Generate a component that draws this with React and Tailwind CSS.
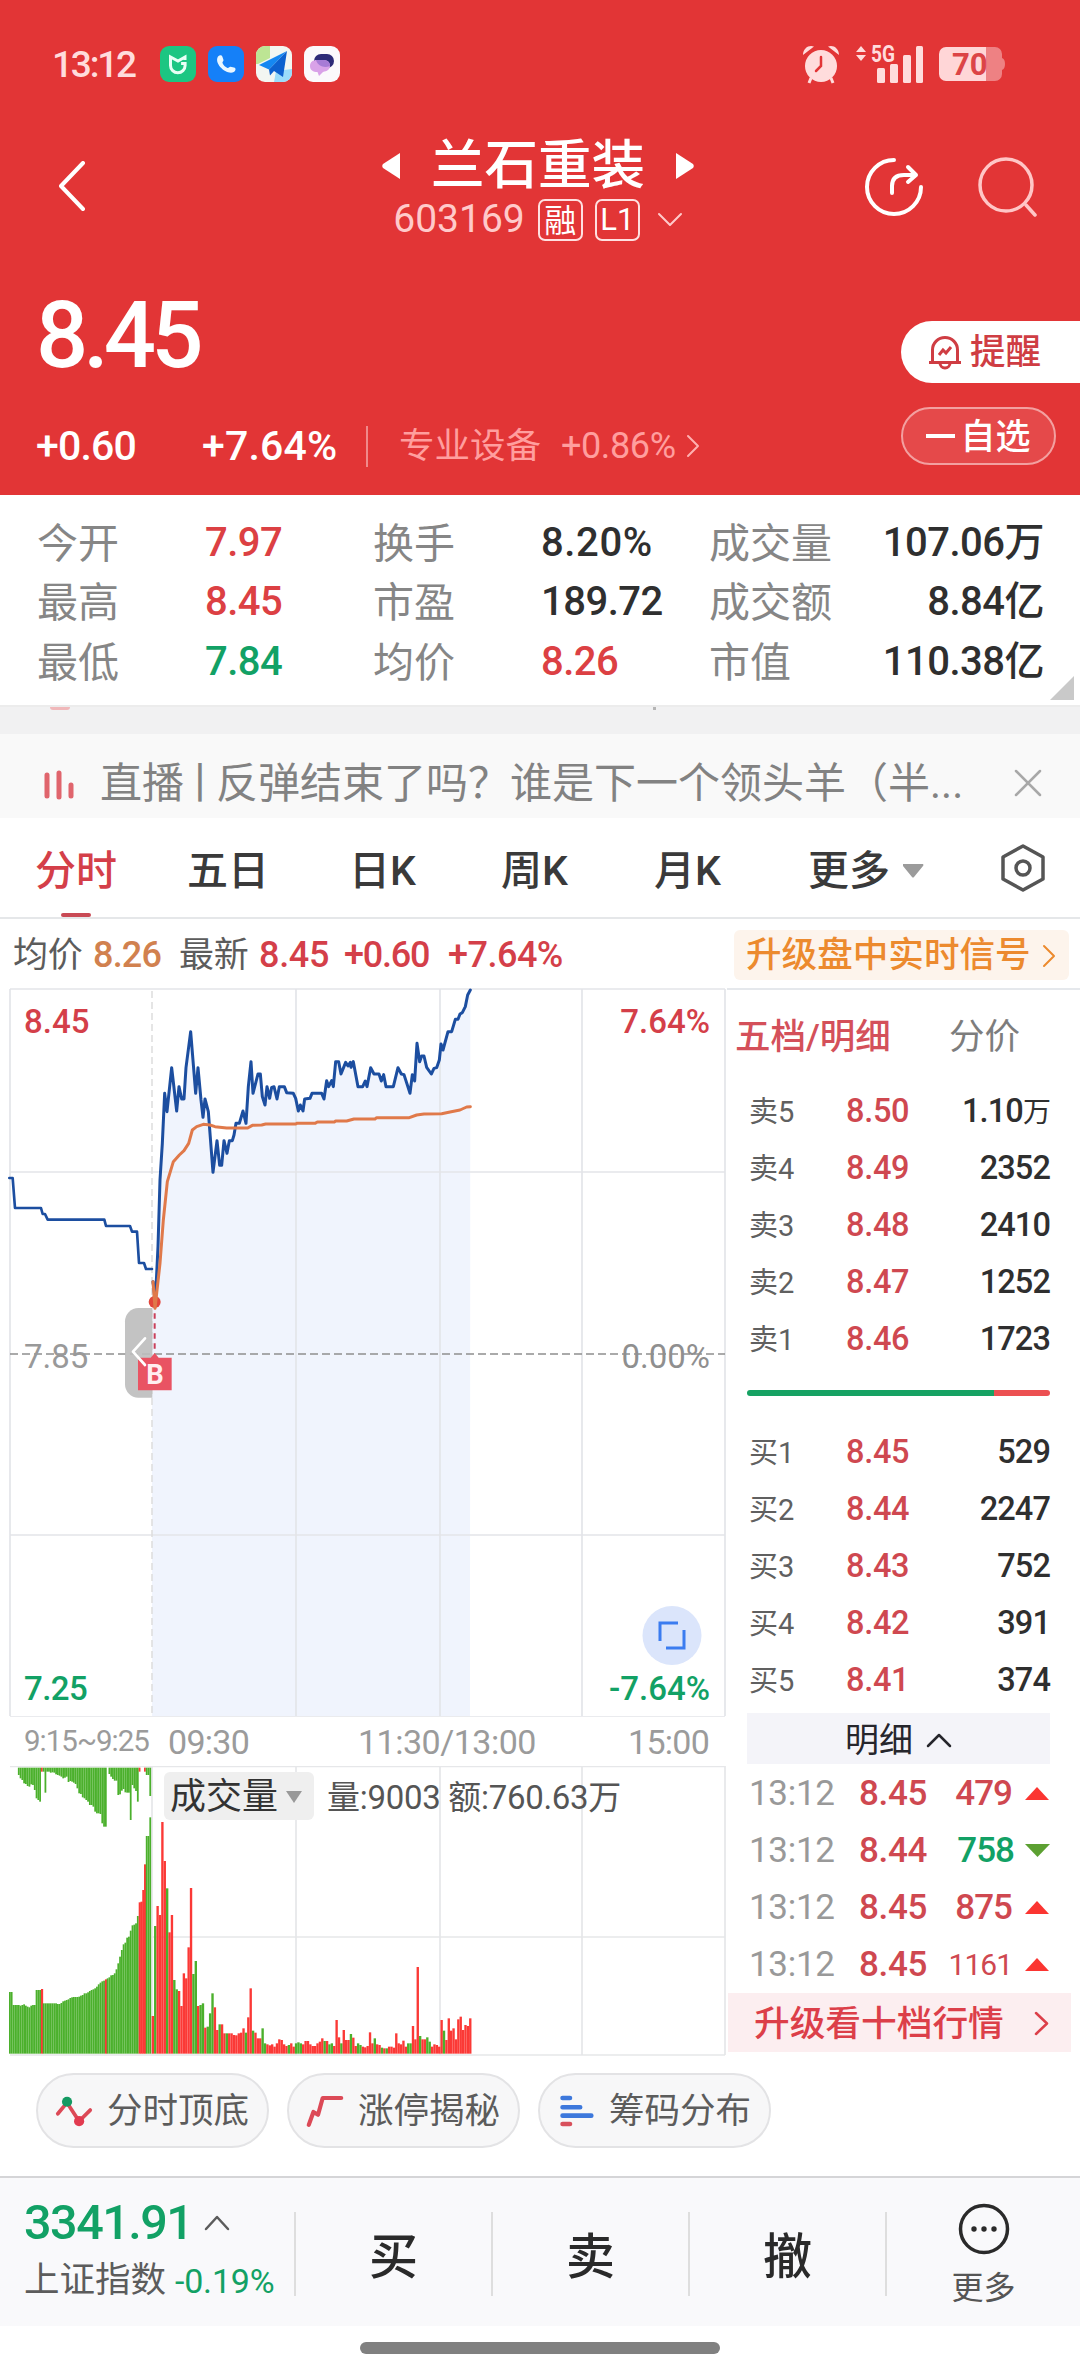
import React from "react";

const statRows = [
    [["今开", "7.97", "red"], ["换手", "8.20%", "dark"], ["成交量", "107.06万", "dark"]],
    [["最高", "8.45", "red"], ["市盈", "189.72", "dark"], ["成交额", "8.84亿", "dark"]],
    [["最低", "7.84", "green"], ["均价", "8.26", "red"], ["市值", "110.38亿", "dark"]],
];

const textColors = {
    red: "text-[#dc4043]",
    green: "text-[#12a165]",
    dark: "text-[#2f2f2f]",
};

const sells = [
    ["卖5", "8.50", "1.10", "万"],
    ["卖4", "8.49", "2352"],
    ["卖3", "8.48", "2410"],
    ["卖2", "8.47", "1252"],
    ["卖1", "8.46", "1723"],
];

const buys = [
    ["买1", "8.45", "529"],
    ["买2", "8.44", "2247"],
    ["买3", "8.43", "752"],
    ["买4", "8.42", "391"],
    ["买5", "8.41", "374"],
];

const trades = [
    { time: "13:12", price: "8.45", qty: "479", up: true },
    { time: "13:12", price: "8.44", qty: "758", up: false },
    { time: "13:12", price: "8.45", qty: "875", up: true },
    { time: "13:12", price: "8.45", qty: "1161", up: true },
];

// price lines, in thirds of a pixel
const preLine =
    "28,594 38,594 45,684 123,684 128,702 135,702 143,719 313,719 318,738 390,738 396,755 411,755 417,849 432,849 438,867 456,867";
const priceLine =
    "459,905 466,965 474,800 480,600 487,490 494,340 501,395 515,263 530,393 537,320 545,357 552,357 558,263 572,155 587,340 594,263 603,360 609,412 615,357 625,395 639,577 651,482 659,556 665,556 672,482 681,520 688,482 697,482 702,465 708,430 718,430 729,393 738,430 745,320 753,245 759,340 774,282 781,282 787,350 795,375 801,320 809,355 815,322 822,320 831,357 838,320 853,320 860,338 880,340 887,355 895,393 901,375 909,393 914,357 930,355 936,340 965,340 972,357 980,302 986,320 995,302 1000,320 1007,245 1016,245 1023,282 1037,247 1044,258 1051,247 1053,262 1060,245 1074,320 1088,320 1096,303 1101,320 1112,263 1122,282 1137,282 1144,303 1151,284 1158,320 1180,320 1194,263 1204,282 1212,284 1230,340 1237,284 1244,303 1251,190 1259,245 1265,228 1272,228 1280,262 1294,282 1302,265 1310,263 1318,240 1323,192 1329,210 1344,155 1355,155 1366,118 1374,118 1380,102 1387,98 1396,80 1403,45 1411,30";
const avgLine =
    "459,905 465,985 480,850 490,720 502,605 520,545 538,525 552,512 566,490 577,450 590,440 610,433 630,435 645,440 680,444 743,444 757,436 785,435 797,432 888,432 890,430 945,430 952,426 1003,426 1007,423 1040,423 1062,417 1125,417 1130,413 1228,413 1250,405 1272,402 1325,401 1350,396 1380,390 1400,381 1411,380";

// volume bars: top edge plus r(ed) / g(reen)
const parseBars = (text) =>
    text.split(" ").map((item) => ({ y: parseInt(item, 10), red: item.endsWith("r") }));

const callBars = parseBars(
    "696 696 735 735 735 735 737 735 733 737 740 742 737 735 735 690 690 690 687r 730 730 730 730 730 730 730 730 732 732 729 724 722 720 718 714 712 711 711 711 710 707 705 700 700 697 693 690 688 685 680 673 668 664 662 658r 655 652 646 645 640 628 610 590 570 553 548 533 530 512 496 494 490 468 427r 425r 390r 313r 228 228 172"
);
const hangBars = parseBars(
    "0 0 0 0 0 45 55 60 70 72 78 80 73 75 90 115 120 125 35r 35 98 35 35 38 37 38 43 45 47 50 55 53 50 66 63 65 68 72 85 100 102 112 115 120 125 135 135 140 155 160 160 162 190 200 200 0 42 50 57 62 62 105 103 92 87 97 98 98 180 75 85 93 125 35r 0 0 35r 45 45 108"
);
const dayBars = parseBars(
    "768r 498 438r 465r 186r 303r 385 517r 465r 660 688 693r 738r 640r 655r 562r 384r 642 603 738r 735 730 803r 800 760 700 742r 810r 793 793r 820r 820 820r 820r 825r 826r 820r 818r 805r 818 772r 685r 812 818r 835r 835r 805 850 853r 856r 853r 860r 850r 838r 840r 853r 858r 855 850r 860r 850 847 850 853r 843r 843r 853r 858r 858r 850r 845r 835r 843 843r 853 850 858r 780r 832r 850 810r 840r 840r 822 833r 858r 850 855 860r 862r 858r 817r 850r 835 853r 855r 863 865r 865 860r 860r 863r 820r 850r 853r 842r 860r 850 850 798r 838r 621r 828 838r 838r 832 845 860r 853r 855r 860r 780r 812 840r 775r 812r 805r 838r 778r 770r 810r 795r 798r 775r"
);

const barColor = (bar) => (bar.red ? "#fb3936" : "#4bb02c");

const Chevron = ({ d, className, w, h, stroke = 2.5 }) => (
    <svg className={className} width={w} height={h} viewBox={`0 0 ${w} ${h}`} fill="none" stroke="currentColor" strokeWidth={stroke} strokeLinecap="round" strokeLinejoin="round">
        <path d={d} />
    </svg>
);

const StatusBar = () => (
    <div className="flex h-[128px] items-center pl-[52px] pr-[74px] text-[#ffdcdc]">
        <span className="w-[108px] text-[37px] font-medium tracking-[-2.2px]">13:12</span>
        <div className="flex gap-[12px]">
            <svg width="36" height="36" viewBox="0 0 36 36">
                <rect width="36" height="36" rx="9" fill="#1cc682" />
                <path d="M10.5 17V11l7.500 4L25 11v3" fill="none" stroke="#e8fff5" strokeWidth="3" />
                <path d="M10.500 16v3.500a7.300 7.300 0 0 0 14.600 0V17.500h-4" fill="none" stroke="#e8fff5" strokeWidth="3" />
            </svg>
            <svg width="36" height="36" viewBox="0 0 36 36">
                <rect width="36" height="36" rx="9" fill="#1580f8" />
                <path d="M10 10.500c2-2 4-1.500 4.500.500l1 3c.3 1.200-1.500 1.800-1 3 .8 2.200 2.700 4 5 5 1.200.5 1.700-1.500 3-1.200l3.500.8c2.200.7 2 3-.2 4.500C18.500 29.500 5.500 17.500 10 10.500z" fill="#e9f6ff" />
            </svg>
            <svg width="36" height="36" viewBox="0 0 36 36">
                <rect width="36" height="36" rx="9" fill="#f3f6f2" />
                <path d="M9 0h5v12L2 18H0V9a9 9 0 0 1 9-9z" fill="#bde594" />
                <path d="M20 25l16-2v4a9 9 0 0 1-9 9h-9z" fill="#9adcfa" />
                <path d="M31 5L3 19l10 4.500z" fill="#1588f2" />
                <path d="M31 5L13 23.500l1 6 4-4.500 9 6z" fill="#0d61cf" />
            </svg>
            <svg width="36" height="36" viewBox="0 0 36 36">
                <rect width="36" height="36" rx="9" fill="#fbf9fc" />
                <rect x="10" y="8" width="20" height="14" rx="7" fill="#2d2a78" />
                <path d="M13 14h6c3 0 7 1 7 5.500S23 25 19 26l-4 4-1.500-4C9 26 6 24 6 20s3-6 7-6z" fill="#d9a2e8" />
                <path d="M13 14h6c3 0 7 1.500 7 6-5 2-12 1-14-6z" fill="#a77bd6" />
            </svg>
        </div>
        <div className="ml-auto flex items-center">
            <svg width="38" height="39" viewBox="0 0 38 39" fill="currentColor">
                <circle cx="19" cy="21" r="16" />
                <path d="M1 10C1 3 7-.5 12 1.500z M37 10C37 3 31-.5 26 1.500z" />
                <path d="M9 33l-2 5M29 33l2 5" stroke="currentColor" strokeWidth="3" />
                <path d="M19 12v9l-5 5" fill="none" stroke="#e23536" strokeWidth="2.500" strokeLinecap="round" />
            </svg>
            <svg className="-mt-[6px] ml-[15px]" width="70" height="44" viewBox="0 -6 70 44" fill="currentColor">
                <path d="M1 7l5-6 5 6z M1 10l5 6 5-6z" />
                <text x="16" y="16.500" fontFamily="Roboto" fontSize="23" fontWeight="700" textLength="24" lengthAdjust="spacingAndGlyphs">5G</text>
                <rect x="22" y="23" width="8" height="15" rx="1.500" />
                <rect x="35" y="19" width="8" height="19" rx="1.500" />
                <rect x="48" y="10" width="8" height="28" rx="1.500" />
                <rect x="61" y="1" width="7" height="37" rx="1.500" />
            </svg>
            <svg className="ml-[14px]" width="67" height="38" viewBox="0 -2 67 38">
                <path d="M47 0h9a7 7 0 0 1 7 7v4q3 1 3 6t-3 6v4a7 7 0 0 1-7 7h-9z" fill="#ee8183" />
                <path d="M7 0h40v34H7a7 7 0 0 1-7-7V7a7 7 0 0 1 7-7z" fill="#ffd6d7" />
                <text x="13" y="28" fontFamily="Roboto" fontSize="31" fontWeight="700" fill="#dc4446">70</text>
            </svg>
        </div>
    </div>
);

const TitleBar = () => (
    <div className="flex h-[122px] items-center pl-[58px] pr-[42px] text-white">
        <Chevron w={28} h={50} d="M25 2L3 25l22 23" stroke={4} className="mb-[6px]" />
        <div className="ml-auto flex w-[320px] flex-col items-center">
            <div className="flex h-[62px] items-center gap-[31px]">
                <svg width="18" height="26" viewBox="0 0 18 26" fill="currentColor"><path d="M18 0v26L1 15q-1.500-2 0-4z" /></svg>
                <h1 className="text-[53.500px] font-medium leading-[62px]">兰石重装</h1>
                <svg width="18" height="26" viewBox="0 0 18 26" fill="currentColor"><path d="M0 0v26l17-11q1.500-2 0-4z" /></svg>
            </div>
            <div className="mb-[1px] flex h-[46px] items-center">
                <span className="text-[39px] text-[#ffcaca]">603169</span>
                <span className="ml-[13px] flex h-[42px] w-[45px] items-center justify-center rounded-[7px] border-2 border-[#ffe0e0] pt-[2px] text-[32px]">融</span>
                <span className="ml-[12px] flex h-[42px] w-[45px] items-center justify-center rounded-[7px] border-2 border-[#ffe0e0] text-[31px]">L1</span>
                <Chevron w={26} h={16} d="M2 2l11 11L24 2" stroke={2} className="ml-[17px] text-[#ffcaca]" />
            </div>
        </div>
        <svg className="mb-[5px] ml-[166px]" width="60" height="60" viewBox="0 0 60 60" fill="none" stroke="currentColor" strokeWidth="4" strokeLinecap="round" strokeLinejoin="round">
            <path d="M30 3a27 27 0 1 0 27 27M28 36v-7q0-11 12-11h12M44 10l8 8-8 7" />
        </svg>
        <svg className="mb-[5px] ml-[54px] text-[#ffc6c6]" width="60" height="60" viewBox="0 0 60 60" fill="none" stroke="currentColor" strokeWidth="3.500" strokeLinecap="round">
            <circle cx="28" cy="28" r="26" />
            <path d="M48 48l9 10" />
        </svg>
    </div>
);

const Header = () => (
    <header className="flex h-[495px] flex-col bg-[#e23536]">
        <StatusBar />
        <TitleBar />
        <div className="flex flex-1 justify-between pl-[36px] text-white">
            <div>
                <div className="h-[92px] mt-[40px] text-[92px] font-medium tracking-[-5px]">8.45</div>
                <div className="mt-[43px] flex h-[42px] items-center text-[41px] font-medium tracking-[-0.8px]">
                    <span className="w-[166px]">+0.60</span>
                    <span className="w-[164px] tracking-[0.2px]">+7.64%</span>
                    <span className="h-[41px] w-[2px] bg-[#f08a8b]" />
                    <span className="ml-[31px] pt-[1px] text-[35.500px] font-normal tracking-normal text-[#ff9e9e]">专业设备</span>
                    <span className="ml-[20px] w-[125px] text-[36px] font-normal tracking-[-0.4px] text-[#ff9e9e]">+0.86%</span>
                    <Chevron w={15} h={24} d="M2 2l10 10L2 22" stroke={2} className="text-[#ffb0b0]" />
                </div>
            </div>
            <div className="flex w-[179px] flex-col pt-[71px]">
                <div className="flex h-[62px] items-center rounded-l-full bg-white pl-[27px] text-[35.500px] font-medium text-[#cf3d43]">
                    <svg className="mr-[8px]" width="34" height="36" viewBox="0 0 34 36" fill="none" stroke="currentColor" strokeWidth="3">
                        <path d="M4.500 28V16a12.500 12.500 0 0 1 25 0v12M1 28.500h32M12 29a5 5 0 0 0 10 0" />
                        <path d="M11 21l4-5 3 3 5-6" />
                    </svg>
                    <span className="pt-[2px]">提醒</span>
                </div>
                <div className="mt-[24px] flex h-[58px] w-[155px] items-center justify-center rounded-full border-2 border-[#f3a0a0] bg-[#e5494a] text-[35px] font-medium">
                    <span className="mr-[5px] h-[4px] w-[29px] bg-white" />
                    <span className="pt-[2px]">自选</span>
                </div>
            </div>
        </div>
    </header>
);

const Stats = () => (
    <section className="relative flex h-[210px] flex-col pl-[37px] pr-[36px] pt-[18px]">
        {statRows.map((row, i) => (
            <div key={i} className="flex h-[59.500px] items-center text-[40px]">
                {row.map(([label, value, color], j) => (
                    <React.Fragment key={label}>
                        <span className={`${j === 2 ? "w-[128px]" : "w-[168px]"} pt-[3px] text-[41px] text-[#868686]`}>{label}</span>
                        <span className={`${j === 2 ? "flex-1 text-right" : "w-[168px]"} font-medium ${value.endsWith("%") ? "tracking-[0.6px]" : "tracking-[-0.5px]"} ${textColors[color]}`}>{value}</span>
                    </React.Fragment>
                ))}
            </div>
        ))}
        <svg className="absolute bottom-[5px] right-[6px]" width="24" height="24" viewBox="0 0 24 24"><path d="M24 0v24H0z" fill="#c9c9c9" /></svg>
    </section>
);

const LiveBanner = () => (
    <section>
        <div className="flex h-[29px] items-start border-t-2 border-[#ececec] bg-[#f1f1f2]">
            <span className="ml-[50px] h-[3px] w-[20px] rounded-b-full bg-[#f0b8ba]" />
            <span className="ml-[583px] h-[3px] w-[3px] bg-[#b5b5b5]" />
        </div>
        <div className="flex h-[84px] items-center bg-[#f9f9f9] pl-[44px] pr-[38px] pt-[16px]">
            <svg className="mt-[1px] w-[56px]" width="56" height="30" viewBox="0 0 56 30" stroke="#e0656d" strokeWidth="5" strokeLinecap="round">
                <path d="M3 5v21M15 3v24M27 15v11" />
            </svg>
            <span className="whitespace-nowrap text-[42px] text-[#828282]">
                直播<span className="-mx-[5px]">丨</span>反弹结束了吗？谁是下一个领头羊（半...
            </span>
            <Chevron w={28} h={28} d="M2 2l24 24M26 2L2 26" stroke={2.500} className="mb-[2px] ml-auto text-[#a8a8a8]" />
        </div>
    </section>
);

const Tabs = () => (
    <nav className="flex h-[101px] items-stretch border-b-2 border-[#e5e7e9] pl-[35px] text-[41px] font-medium text-[#3a3a3a]">
        <div className="flex w-[152px] flex-col justify-between pt-[33px] text-[#d43f49]">
            分时
            <span className="ml-[26px] h-[4px] w-[30px] rounded-full bg-[#c94a55]" />
        </div>
        <span className="w-[162px] pt-[33px]">五日</span>
        <span className="w-[152px] pt-[33px]">日K</span>
        <span className="w-[153px] pt-[33px]">周K</span>
        <span className="w-[154px] pt-[33px]">月K</span>
        <span className="w-[94px] pt-[33px]">更多</span>
        <svg className="mt-[46px]" width="22" height="14" viewBox="0 0 22 14"><path d="M1 0h20q1 1 0 2l-9 11q-1 1-2 0L1 2z" fill="#9b9b9b" /></svg>
        <svg className="ml-[76px] mt-[26px]" width="46" height="48" viewBox="0 0 46 48" fill="none" stroke="#555555" strokeWidth="3.500" strokeLinejoin="round">
            <path d="M23 2l20 11v22L23 46 3 35V13z" />
            <circle cx="23" cy="24" r="7" />
        </svg>
    </nav>
);

const InfoRow = () => (
    <div className="flex h-[69px] items-center pl-[13px] pr-[11px] pt-[2px] text-[36px] font-medium tracking-[-0.3px] text-[#d43f49]">
        <span className="w-[80px] pt-[2px] text-[35px] font-normal text-[#5c5c5c]">均价</span>
        <span className="w-[86px] tracking-[-0.8px] text-[#d1814f]">8.26</span>
        <span className="w-[80px] pt-[2px] text-[35px] font-normal text-[#5c5c5c]">最新</span>
        <span className="w-[85px]">8.45</span>
        <span className="w-[104px] tracking-[-1.2px]">+0.60</span>
        <span className="tracking-[-0.5px]">+7.64%</span>
        <div className="ml-auto flex h-[50px] w-[335px] items-center rounded-[6px] bg-[#fdf4ec] pl-[12px] pt-[2px] text-[35.600px] tracking-normal text-[#ec8a2e]">
            升级盘中实时信号
            <Chevron w={15} h={24} d="M2 2l10 10L2 22" stroke={2} className="ml-[11px]" />
        </div>
    </div>
);

const PriceChart = () => (
    <div className="relative h-[729px] text-[33px] font-medium">
        <svg className="block" width="727" height="729" viewBox="0 988 727 729" fill="none">
            <g transform="translate(0 980) scale(0.33333)">
                <polygon points={`${priceLine} 1410,2208 456,2208 456,905`} fill="#f0f4fd" />
            </g>
            <path d="M10 989H725M10 989V1716M10 1717H725M725 989V1716M10 1172H725M10 1535H725M296 989V1716M440 989V1716M582 989V1716" stroke="#e3e5e9" strokeWidth="1.700" />
            <path d="M152 991V1716" stroke="#dddddd" strokeWidth="1.500" strokeDasharray="7 4" />
            <path d="M10 1354H725" stroke="#8e8e8e" strokeWidth="1.700" strokeDasharray="8 4" />
            <g transform="translate(0 980) scale(0.33333)" strokeLinejoin="round" strokeLinecap="round">
                <path d="M457 984H415a40 40 0 0 0-40 40v189a40 40 0 0 0 40 40h42z" fill="#bdbdbd" fillOpacity="0.9" />
                <path d="M414 1133h38l12-14 12 14h39v98H414z" fill="#e95363" />
                <path d="M435 1075l-36 40 36 40" stroke="#ffffff" strokeWidth="8" />
                <path d="M464 1000V1112" stroke="#c9405a" strokeWidth="6" strokeDasharray="16 14" strokeLinecap="butt" />
                <polyline points={preLine} stroke="#1c4ea0" strokeWidth="8" />
                <polyline points={priceLine} stroke="#1c4ea0" strokeWidth="9" />
                <circle cx="464" cy="966" r="18" fill="#e2463c" />
                <polyline points={avgLine} stroke="#e0794a" strokeWidth="9" />
                <text x="439" y="1213" fontFamily="Roboto" fontSize="82" fontWeight="700" fill="#ffeef0">B</text>
            </g>
            <circle cx="672" cy="1635.500" r="29.500" fill="#dbe5fb" />
            <path d="M660 1641v-18h18M666 1648h18v-18" stroke="#3b7cf0" strokeWidth="3" />
        </svg>
        <span className="absolute left-[24px] top-[17px] text-[#d43f49]">8.45</span>
        <span className="absolute right-[17px] top-[17px] text-[#d43f49]">7.64%</span>
        <span className="absolute left-[24px] top-[352px] font-normal text-[#999999]">7.85</span>
        <span className="absolute right-[17px] top-[352px] font-normal text-[#8f8f8f]">0.00%</span>
        <span className="absolute left-[24px] top-[684px] tracking-[-0.6px] text-[#12a165]">7.25</span>
        <span className="absolute right-[17px] top-[684px] text-[#12a165]">-7.64%</span>
    </div>
);

const TimeAxis = () => (
    <div className="flex h-[49px] items-center pl-[24px] pt-[1px] text-[34px] text-[#9b9b9b]">
        <span className="w-[144px] text-[29.500px] tracking-[-1px]">9:15~9:25</span>
        <span className="w-[190px] tracking-[-0.7px]">09:30</span>
        <span className="w-[270px] tracking-[-0.5px]">11:30/13:00</span>
        <span className="tracking-[-0.7px]">15:00</span>
    </div>
);

const VolumeChart = () => (
    <div className="relative h-[290px]">
        <svg className="block" width="727" height="290" viewBox="0 1766 727 290" fill="none">
            <path d="M10 1766.500H725M10 2055H725M725 1766V2055M10 1937H725M152 1717V2054M296 1766V2055M440 1766V2055M582 1766V2055" stroke="#e6e7e9" strokeWidth="1.700" />
            <path d="M10 1790H151V2054H10z" fill="#ffffff" />
            <g transform="translate(0 1760) scale(0.33333)">
                {callBars.map((bar, i) => (
                    <rect key={i} x={27 + i * 5.33} y={bar.y} width={bar.red ? 6.5 : 5.33} height={881 - bar.y} fill={barColor(bar)} />
                ))}
                {hangBars.map((bar, i) => bar.y > 0 && (
                    <rect key={i} x={27 + i * 5.33} y="23" width="5.33" height={bar.y - 23} fill={barColor(bar)} />
                ))}
                {dayBars.map((bar, i) => (
                    <rect key={i} x={455 + i * 7.16} y={bar.y} width="7.1" height={881 - bar.y} fill={barColor(bar)} />
                ))}
            </g>
        </svg>
        <div className="absolute left-[164px] top-[6px] flex h-[48px] items-center">
            <div className="flex h-full w-[150px] items-center rounded-[6px] bg-[#efefef] pl-[6px] pt-[1px] text-[36px] text-[#333333]">
                成交量
                <svg className="ml-[8px]" width="16" height="12" viewBox="0 0 16 12"><path d="M0 0h16L8 12z" fill="#999999" /></svg>
            </div>
            <span className="ml-[13px] pt-[2px] text-[33px] tracking-[-0.3px] text-[#555555]">量:9003 额:760.63万</span>
        </div>
    </div>
);

const OrderRow = ({ row }) => (
    <div className="flex h-[57px] items-center text-[32.500px]">
        <span className="w-[97px] pt-[1px] text-[29px] text-[#606060]">{row[0]}</span>
        <span className="font-medium tracking-[-0.3px] text-[#cf4850]">{row[1]}</span>
        <span className="ml-auto font-medium tracking-[-0.9px] text-[#2f2f2f]">
            {row[2]}
            {row[3] && <span className="text-[28px] font-normal">{row[3]}</span>}
        </span>
    </div>
);

const OrderBook = () => (
    <div className="flex h-[1068px] flex-1 flex-col border-t-2 border-[#e5e8ec] pl-[1px]">
        <div className="flex h-[93px] items-center pl-[7px] pt-[3px] text-[35.500px]">
            <span className="w-[214px] font-medium text-[#d4505a]">五档/明细</span>
            <span className="text-[#7d7d7d]">分价</span>
        </div>
        <div className="pl-[21px] pr-[30px]">
            {sells.map((row) => <OrderRow key={row[0]} row={row} />)}
            <div className="-ml-[2px] mb-[28px] mt-[22px] flex h-[6px] overflow-hidden rounded-full">
                <span className="w-[247px] bg-[#16a263]" />
                <span className="flex-1 bg-[#ec5052]" />
            </div>
            {buys.map((row) => <OrderRow key={row[0]} row={row} />)}
            <div className="-ml-[2px] mt-[4px] flex h-[51px] items-center justify-center bg-[#f4f4f9] pt-[3px] text-[34px] text-[#26262c]">
                明细
                <Chevron w={26} h={15} d="M2 13L13 2l11 11" stroke={2.500} className="ml-[13px]" />
            </div>
            {trades.map((trade, i) => (
                <div key={i} className={`flex h-[57px] items-center text-[35px] tracking-[-0.3px] ${i === 0 ? "mt-[1px]" : ""}`}>
                    <span className="w-[110px] text-[#999999]">{trade.time}</span>
                    <span className="font-medium text-[#cf4850]">{trade.price}</span>
                    <span className={`ml-auto ${trade.up ? "text-[#cf4850]" : "text-[#12a165]"} ${trade.qty.length > 3 ? "text-[30px] tracking-[-1px]" : "font-medium tracking-[-1px]"}`}>{trade.qty}</span>
                    <svg className={trade.up ? "ml-[12px]" : "ml-[10px]"} width="26" height="13" viewBox="0 0 26 13">
                        {trade.up ? <path d="M1 13L13 0l12 13z" fill="#fb3531" /> : <path d="M1 0h25L13.500 13z" fill="#5ca032" />}
                    </svg>
                </div>
            ))}
        </div>
        <div className="mb-[4px] mr-[9px] mt-auto flex h-[59px] items-center bg-[#fceef0] pl-[26px] pr-[22px] pt-[4px] text-[35.700px] font-medium text-[#dc3f49]">
            升级看十档行情
            <Chevron w={15} h={25} d="M2 2l11 10.500L2 23" stroke={2.500} className="mb-[3px] ml-auto" />
        </div>
    </div>
);

const Chip = ({ label, children }) => (
    <button className="flex h-[75px] w-[233px] items-center rounded-full border-2 border-[#e3e3e5] bg-[#f7f7f8] pl-[17px] text-[35.500px] text-[#5c5c5c]">
        <svg className="mr-[14px]" width="38" height="34" viewBox="0 0 41 36" fill="none" strokeWidth="4" strokeLinecap="round" strokeLinejoin="round">
            {children}
        </svg>
        <span className="pt-[2px]">{label}</span>
    </button>
);

const Chips = () => (
    <div className="flex h-[120px] gap-[18px] pl-[36px] pt-[17px]">
        <Chip label="分时顶底">
            <path d="M3 21l10-12 13 20 12-12" stroke="#dc4a57" />
            <circle cx="13" cy="8" r="5.500" fill="#149a62" />
            <circle cx="26" cy="29" r="5.500" fill="#e23b50" />
        </Chip>
        <Chip label="涨停揭秘">
            <path d="M3 33l5-14 5 3 5-18h20" stroke="#dc4a57" strokeWidth="4.500" />
        </Chip>
        <Chip label="筹码分布">
            <path d="M6 4h8M6 14h19M6 23h31" stroke="#3d78dc" strokeWidth="5" />
            <path d="M6 32h8" stroke="#d8505c" strokeWidth="5" />
        </Chip>
    </div>
);

const Divider = () => <span className="mt-[34px] h-[84px] w-[2px] bg-[#dedede]" />;

const BottomBar = () => (
    <footer>
        <div className="flex h-[150px] items-start border-t-2 border-[#d5d5d7] bg-[#f9f9fb]">
            <div className="w-[294px] pl-[24px] pt-[20px]">
                <div className="flex h-[50px] items-center text-[48.500px] font-medium tracking-[-1.500px] text-[#12a165]">
                    <span className="w-[180px]">3341.91</span>
                    <Chevron w={26} h={16} d="M2 14L13 2l11 12" stroke={2.500} className="text-[#5c5c5c]" />
                </div>
                <div className="mt-[15px] flex items-center whitespace-nowrap text-[35.500px] text-[#5c5c5c]">
                    上证指数
                    <span className="ml-[9px] text-[34px] tracking-[-0.2px] text-[#12a165]">-0.19%</span>
                </div>
            </div>
            <Divider />
            <span className="flex-1 pt-[55px] text-center text-[49px] font-medium text-[#2a2a2a]">买</span>
            <Divider />
            <span className="flex-1 pt-[55px] text-center text-[49px] font-medium text-[#2a2a2a]">卖</span>
            <Divider />
            <span className="flex-1 pt-[55px] text-center text-[49px] font-medium text-[#2a2a2a]">撤</span>
            <Divider />
            <div className="flex w-[193px] flex-col items-center gap-[17px] pt-[25px] text-[32px] text-[#555555]">
                <svg width="52" height="52" viewBox="0 0 52 52">
                    <circle cx="26" cy="26" r="23.500" fill="none" stroke="#2a2a2a" strokeWidth="3.500" />
                    <circle cx="16" cy="26" r="2.700" fill="#2a2a2a" />
                    <circle cx="26" cy="26" r="2.700" fill="#2a2a2a" />
                    <circle cx="36" cy="26" r="2.700" fill="#2a2a2a" />
                </svg>
                更多
            </div>
        </div>
        <div className="flex h-[49px] justify-center pt-[16px]">
            <span className="h-[12px] w-[360px] rounded-full bg-[#808080]" />
        </div>
    </footer>
);

const App = () => (
    <div className="h-[2376px] w-[1080px] overflow-hidden bg-white font-[Roboto,'Noto_Sans_CJK_SC',sans-serif] leading-none">
        <Header />
        <Stats />
        <LiveBanner />
        <Tabs />
        <InfoRow />
        <main className="flex h-[1068px]">
            <div className="w-[727px]">
                <PriceChart />
                <TimeAxis />
                <VolumeChart />
            </div>
            <OrderBook />
        </main>
        <Chips />
        <BottomBar />
    </div>
);

export default App;
